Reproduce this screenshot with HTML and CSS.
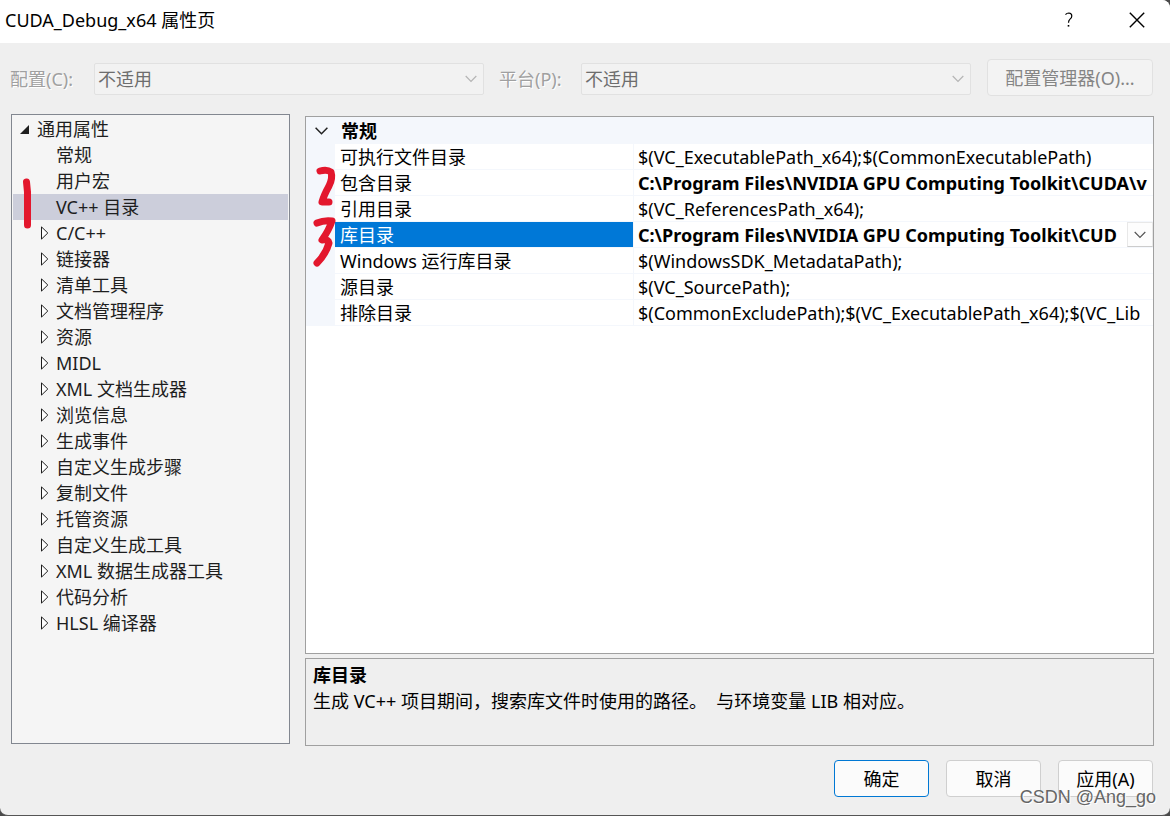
FILE: index.html
```html
<!DOCTYPE html>
<html lang="zh-CN">
<head>
<meta charset="utf-8">
<title>CUDA_Debug_x64 属性页</title>
<link rel="stylesheet" href="styles.css">
</head>
<body>
<div class="dialog">
  <header class="titlebar">
    <h1 class="title">CUDA_Debug_x64 属性页</h1>
    <button class="caption-btn" type="button" aria-label="帮助">
      <svg width="10" height="16" viewBox="0 0 10 16"><path d="M1.5 2.6Q2.8 1 4.8 1Q7.8 1.2 7.8 3.9Q7.8 5.6 6 7.1Q4.5 8.5 4.5 10.8" fill="none" stroke="#000" stroke-width="1.2"/><rect x="3.7" y="13" width="1.6" height="1.6"/></svg>
    </button>
    <button class="caption-btn" type="button" aria-label="关闭">
      <svg width="16" height="16" viewBox="0 0 16 16"><path d="M.8.8 15.2 15.2M15.2.8.8 15.2" fill="none" stroke="#000" stroke-width="1.4"/></svg>
    </button>
  </header>

  <div class="toolbar">
    <label class="field-label" for="config">配置(C):</label>
    <div class="combo">
      <select id="config" disabled><option>不适用</option></select>
      <svg class="combo-arrow" width="12" height="8" viewBox="0 0 12 8"><path d="M.7 1 6 6.3 11.3 1"/></svg>
    </div>
    <label class="field-label platform" for="platform">平台(P):</label>
    <div class="combo">
      <select id="platform" disabled><option>不适用</option></select>
      <svg class="combo-arrow" width="12" height="8" viewBox="0 0 12 8"><path d="M.7 1 6 6.3 11.3 1"/></svg>
    </div>
    <button class="btn manager" type="button" disabled>配置管理器(O)...</button>
  </div>

  <main class="content">
    <nav class="tree" aria-label="属性">
      <svg width="0" height="0" class="defs"><symbol id="closed" viewBox="0 0 8 14"><path d="M.5.9v12.2L6.8 7z" fill="#fff" stroke="#1e1e1e"/></symbol></svg>
      <div class="node root"><svg class="open" width="9" height="9" viewBox="0 0 9 9"><path d="M9 0v9H0z" fill="#1e1e1e"/></svg>通用属性</div>
      <ul class="nodes">
        <li class="node">常规</li>
        <li class="node">用户宏</li>
        <li class="node selected" aria-current="true">VC++ 目录</li>
        <li class="node"><svg class="closed"><use href="#closed"/></svg>C/C++</li>
        <li class="node"><svg class="closed"><use href="#closed"/></svg>链接器</li>
        <li class="node"><svg class="closed"><use href="#closed"/></svg>清单工具</li>
        <li class="node"><svg class="closed"><use href="#closed"/></svg>文档管理程序</li>
        <li class="node"><svg class="closed"><use href="#closed"/></svg>资源</li>
        <li class="node"><svg class="closed"><use href="#closed"/></svg>MIDL</li>
        <li class="node"><svg class="closed"><use href="#closed"/></svg>XML 文档生成器</li>
        <li class="node"><svg class="closed"><use href="#closed"/></svg>浏览信息</li>
        <li class="node"><svg class="closed"><use href="#closed"/></svg>生成事件</li>
        <li class="node"><svg class="closed"><use href="#closed"/></svg>自定义生成步骤</li>
        <li class="node"><svg class="closed"><use href="#closed"/></svg>复制文件</li>
        <li class="node"><svg class="closed"><use href="#closed"/></svg>托管资源</li>
        <li class="node"><svg class="closed"><use href="#closed"/></svg>自定义生成工具</li>
        <li class="node"><svg class="closed"><use href="#closed"/></svg>XML 数据生成器工具</li>
        <li class="node"><svg class="closed"><use href="#closed"/></svg>代码分析</li>
        <li class="node"><svg class="closed"><use href="#closed"/></svg>HLSL 编译器</li>
      </ul>
    </nav>

    <section class="detail">
      <div class="grid">
        <table class="props">
          <colgroup><col class="c-gutter"><col class="c-name"><col></colgroup>
          <thead>
            <tr><th class="fold"><svg width="13" height="8" viewBox="0 0 13 8"><path d="M.6.8 6.5 6.7 12.4.8" fill="none" stroke="#222" stroke-width="1.5"/></svg></th><th colspan="2">常规</th></tr>
          </thead>
          <tbody>
            <tr><td class="gutter"></td><td>可执行文件目录</td><td>$(VC_ExecutablePath_x64);$(CommonExecutablePath)</td></tr>
            <tr><td class="gutter"></td><td>包含目录</td><td class="changed">C:\Program Files\NVIDIA GPU Computing Toolkit\CUDA\v</td></tr>
            <tr><td class="gutter"></td><td>引用目录</td><td>$(VC_ReferencesPath_x64);</td></tr>
            <tr><td class="gutter"></td><td class="name">库目录</td><td class="changed value"><div class="editor"><span class="path">C:\Program Files\NVIDIA GPU Computing Toolkit\CUD</span><button class="drop" type="button" aria-label="展开"><svg width="12" height="8" viewBox="0 0 12 8"><path d="M.7 1 6 6.3 11.3 1" fill="none" stroke="#555" stroke-width="1.2"/></svg></button></div></td></tr>
            <tr><td class="gutter"></td><td>Windows 运行库目录</td><td>$(WindowsSDK_MetadataPath);</td></tr>
            <tr><td class="gutter"></td><td>源目录</td><td>$(VC_SourcePath);</td></tr>
            <tr><td class="gutter"></td><td>排除目录</td><td>$(CommonExcludePath);$(VC_ExecutablePath_x64);$(VC_Lib</td></tr>
          </tbody>
        </table>
      </div>
      <div class="help">
        <h2 class="help-title">库目录</h2>
        <p class="help-text">生成 VC++ 项目期间，搜索库文件时使用的路径。&nbsp; 与环境变量 LIB 相对应。</p>
      </div>
    </section>
  </main>

  <footer class="actions">
    <button class="btn primary" type="button">确定</button>
    <button class="btn" type="button">取消</button>
    <button class="btn" type="button">应用(A)</button>
  </footer>

  <svg class="marks" width="330" height="120" viewBox="10 160 330 120" aria-hidden="true">
    <g fill="none" stroke="#e3172d" stroke-width="7" stroke-linecap="round" stroke-linejoin="round">
      <path d="M26.500 182Q28 192 27.500 202V225"/>
      <path d="M320 171Q327 169 331 172Q333 178 329 186Q324 195 322 202L329 202"/>
      <path d="M317 223Q324 220 332 221Q329 230 322 240Q328 239 329 243Q326 254 317 263"/>
    </g>
  </svg>
  <div class="watermark">CSDN @Ang_go</div>
</div>
</body>
</html>
```
FILE: styles.css
```css
* { box-sizing: border-box; }

body {
  margin: 0;
  background: #4a4a4a;
  color: #000;
  font: 18px/26px "Noto Sans", "Noto Sans CJK SC", sans-serif;
}

button, select { font: inherit; color: inherit; }
svg { flex: none; }

.dialog {
  position: relative;
  display: flex;
  flex-direction: column;
  min-height: 100vh;
  background: #efefef;
  border-bottom: 1px solid #555;
  border-radius: 0 8px 8px 8px;
  overflow: hidden;
}

.titlebar {
  display: flex;
  align-items: center;
  height: 43px;
  padding: 0 0 3px 5px;
  background: #fff;
}
.title { flex: 1; margin: 0; font-size: 18px; font-weight: 400; }
.caption-btn {
  display: flex;
  align-items: center;
  justify-content: center;
  width: 70px;
  height: 40px;
  padding: 0;
  border: 0;
  background: none;
}
.caption-btn:last-child { width: 66px; }

.toolbar {
  display: flex;
  align-items: center;
  height: 71px;
  padding: 0 17px 0 10px;
}
.field-label { width: 84px; color: #a0a0a0; text-shadow: 1px 1px #fff; }
.platform { width: 82px; margin-left: 15px; }
.combo { position: relative; flex: 1; }
.combo select {
  display: block;
  width: 100%;
  height: 32px;
  padding: 0 24px 0 3px;
  appearance: none;
  border: 1px solid #e1e1e1;
  border-radius: 2px;
  background: #f2f2f2;
  color: #6d6d6d;
  opacity: 1;
}
.combo-arrow {
  position: absolute;
  right: 7px;
  top: 12px;
  fill: none;
  stroke: #b4b4b4;
  stroke-width: 1.2;
}

.btn {
  width: 95px;
  height: 37px;
  padding: 0;
  border: 1px solid #cfcfcf;
  border-radius: 4px;
  background: #fbfbfb;
}
.primary { border-color: #0078d4; }
.manager {
  width: 166px;
  margin: 0 0 2px 16px;
  border-color: #e1e1e1;
  background: #f3f3f3;
  color: #858585;
}

.content {
  flex: 1;
  display: flex;
  gap: 15px;
  padding: 0 16px 0 11px;
}

.tree {
  width: 279px;
  margin-bottom: 2px;
  padding: 1px;
  border: 1px solid #828790;
  background: #f5f5f5;
  color: #1e1e1e;
}
.defs { display: block; }
.nodes { margin: 0; padding: 0; list-style: none; }
.node {
  display: flex;
  align-items: center;
  height: 26px;
  padding-left: 43px;
  white-space: nowrap;
}
.root { padding-left: 7px; }
.open { margin-right: 8px; }
.closed { width: 8px; height: 14px; margin: 0 7px 0 -15px; }
.selected { background: #cccedb; }

.detail {
  flex: 1;
  display: flex;
  flex-direction: column;
  gap: 4px;
  min-width: 0;
  padding-top: 2px;
}
.grid { flex: 1; border: 1px solid #a0a0a0; background: #fff; }
.props { width: 100%; table-layout: fixed; border-collapse: separate; border-spacing: 0; }
.c-gutter { width: 29px; }
.c-name { width: 298px; }
.props th {
  height: 27px;
  padding: 2px 0 0 6px;
  background: #f4f7fc;
  font-weight: 700;
  line-height: 25px;
  text-align: left;
}
.props .fold { padding: 0 0 0 9px; }
.fold svg { display: block; }
.props td {
  height: 26px;
  padding: 2px 0 0 5px;
  border-bottom: 1px solid #f4f7fc;
  line-height: 23px;
  white-space: nowrap;
  overflow: hidden;
}
.props td:last-child { padding-left: 4px; border-left: 1px solid #f4f7fc; }
.props .gutter { background: #f4f7fc; }
.props .name { background: #0078d7 padding-box; color: #fff; }
.props .value { padding-top: 0; }
.changed { font-weight: 700; }
.editor { display: flex; height: 25px; }
.path { flex: 1; min-width: 0; padding-top: 2px; overflow: hidden; }
.drop {
  display: flex;
  align-items: center;
  justify-content: center;
  width: 26px;
  height: 25px;
  padding: 0;
  border: 1px solid #e8e8e8;
  border-bottom-color: #ccc;
  background: #fdfdfd;
}

.help { height: 88px; padding: 3px 7px; border: 1px solid #a0a0a0; }
.help-title, .help-text { margin: 0; font-size: 18px; }

.actions {
  display: flex;
  justify-content: flex-end;
  gap: 17px;
  padding: 14px 17px 18px;
}

.marks { position: absolute; left: 10px; top: 160px; pointer-events: none; }
.watermark {
  position: absolute;
  right: 14px;
  bottom: 5px;
  color: #666;
  font: 18px/26px "Liberation Sans", Arial, sans-serif;
  text-shadow: 1px 1px #fff;
  pointer-events: none;
}
```
